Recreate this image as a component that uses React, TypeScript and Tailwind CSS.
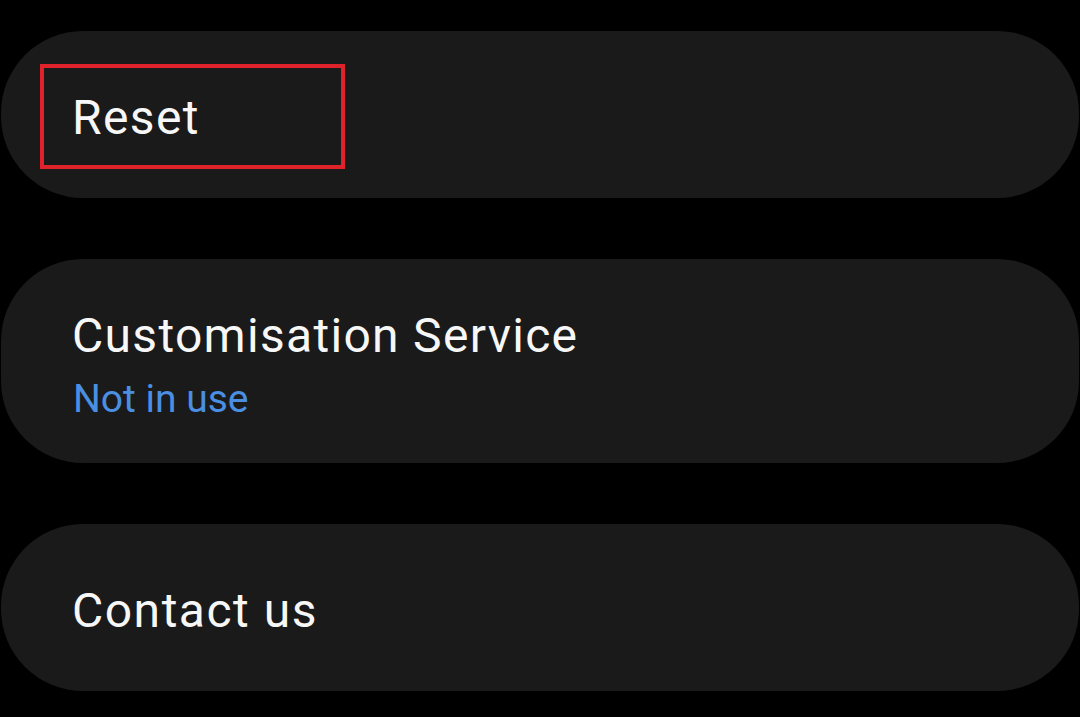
export default function App() {
  return (
    <div
      className="min-h-screen w-full bg-black pt-[31px]"
      style={{ fontFamily: "Roboto, 'Liberation Sans', sans-serif" }}
    >
      <div className="flex flex-col gap-[61px] px-px">
        {/* Reset */}
        <div className="relative flex h-[167px] items-center rounded-[82px] bg-[#1a1a1a] pl-[71px] pt-[6px]">
          <span className="text-[48px] leading-[48px] tracking-[1.4px] text-[#f7f7f7]">Reset</span>
          <div className="absolute left-[39px] top-[33px] h-[105px] w-[305px] border-4 border-[#e0232b]" />
        </div>

        {/* Customisation Service */}
        <div className="flex h-[204px] flex-col rounded-[82px] bg-[#1a1a1a] pl-[71px] pt-[53px]">
          <span className="text-[48px] leading-[48px] tracking-[1.3px] text-[#f7f7f7]">Customisation Service</span>
          <span className="mt-[19px] pl-[1px] text-[39px] leading-[40px] text-[#4a8fe2]">Not in use</span>
        </div>

        {/* Contact us */}
        <div className="flex h-[167px] items-center rounded-[82px] bg-[#1a1a1a] pl-[71px] pt-[6px]">
          <span className="text-[48px] leading-[48px] tracking-[1.5px] text-[#f7f7f7]">Contact us</span>
        </div>
      </div>
    </div>
  );
}
